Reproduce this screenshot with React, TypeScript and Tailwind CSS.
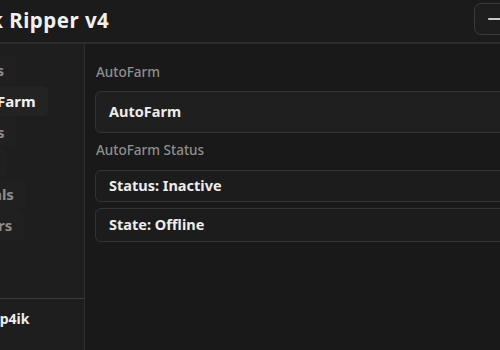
import React from "react";

const tabs = [
  { name: "Gears", active: false },
  { name: "AutoFarm", active: true },
  { name: "Items", active: false },
  { name: "Misc", active: false },
  { name: "Portals", active: false },
  { name: "Others", active: false },
];

export default function App() {
  return (
    <div
      className="w-[500px] h-[350px] overflow-hidden bg-[#191919] flex flex-col"
      style={{ fontFamily: '"Noto Sans", "Open Sans", sans-serif' }}
    >
      {/* Title bar */}
      <div className="h-[44px] shrink-0 bg-[#1b1b1b] border-b-2 border-[#2c2c2c] flex items-center justify-between">
        <div className="overflow-hidden">
          <span className="block -ml-[41px] -mt-[2px] text-[20.5px] font-bold text-[#f0f0f0] whitespace-nowrap tracking-[0.5px]">
            Jack Ripper v4
          </span>
        </div>
        <div className="mr-[-10px] mt-[-4px] w-[36px] h-[32px] rounded-[7px] border border-[#3a3a3a] bg-[#1e1e1e] flex items-center pl-[13px]">
          <div className="w-[20px] h-[2px] bg-[#c8c8c8] rounded-full" />
        </div>
      </div>

      <div className="flex flex-1 min-h-0">
        {/* Sidebar */}
        <div className="w-[85px] shrink-0 bg-[#1e1e1e] border-r border-[#2e2e2e] flex flex-col justify-between overflow-hidden">
          <div className="flex flex-col gap-[1px] pt-[11px]">
            {tabs.map((t) => (
              <div key={t.name} className="h-[30px] flex items-center">
                <div
                  className={
                    "-ml-[40px] h-[30px] flex items-center rounded-[5px] pl-[1px] pr-[12px] " +
                    (t.active ? "bg-[#232323]" : "bg-[#202020]")
                  }
                >
                  <span
                    className={
                      "text-[15px] font-bold whitespace-nowrap " +
                      (t.active ? "text-[#f2f2f2]" : "text-[#8c8c8c]")
                    }
                  >
                    {t.name}
                  </span>
                </div>
              </div>
            ))}
          </div>
          <div className="h-[52px] border-t border-[#3a3a3a] flex items-start pt-[9px]">
            <span className="-ml-[18px] text-[14px] font-bold text-[#ededed] whitespace-nowrap">
              Kep4ik
            </span>
          </div>
        </div>

        {/* Content */}
        <div className="flex-1 pl-[10px] pt-[18px] flex flex-col overflow-hidden">
          <div className="text-[13.5px] text-[#8f8f8f] font-medium h-[20px] flex items-center pl-[1px]">
            AutoFarm
          </div>
          <div className="mt-[9px] mr-[-10px] h-[42px] rounded-[6px] border border-[#333333] bg-[#1f1f1f] flex items-center pl-[13px]">
            <span className="text-[14.5px] font-bold text-[#ececec]">AutoFarm</span>
          </div>
          <div className="mt-[7px] text-[13.5px] text-[#8f8f8f] font-medium h-[20px] flex items-center pl-[1px]">
            AutoFarm Status
          </div>
          <div className="mt-[10px] mr-[-10px] h-[32px] rounded-[6px] border border-[#333333] bg-[#1c1c1c] flex items-center pl-[13px]">
            <span className="text-[14.5px] font-bold text-[#ececec]">Status: Inactive</span>
          </div>
          <div className="mt-[6px] mr-[-10px] h-[34px] rounded-[6px] border border-[#333333] bg-[#1c1c1c] flex items-center pl-[13px]">
            <span className="text-[14.5px] font-bold text-[#ececec]">State: Offline</span>
          </div>
        </div>
      </div>
    </div>
  );
}
